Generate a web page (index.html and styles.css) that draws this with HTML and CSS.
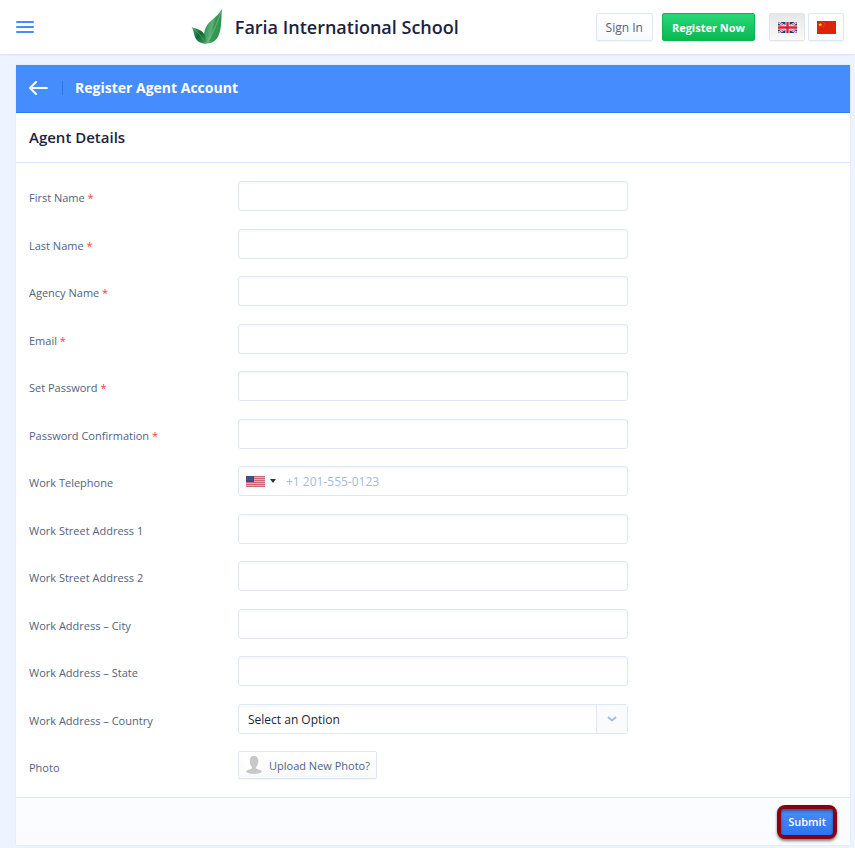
FILE: index.html
```html
<!DOCTYPE html>
<html lang="en">
<head>
  <meta charset="UTF-8">
  <meta name="viewport" content="width=device-width, initial-scale=1">
  <title>Register Agent Account</title>
  <link rel="stylesheet" href="styles.css">
</head>
<body>

  <!-- Top bar -->
  <header class="topbar">
    <button type="button" class="menu-button" aria-label="Menu">
      <svg width="18" height="12" viewBox="0 0 18 12" fill="#458dff">
        <rect width="18" height="2" rx="1"/>
        <rect y="5" width="18" height="2" rx="1"/>
        <rect y="10" width="18" height="2" rx="1"/>
      </svg>
    </button>

    <a href="#" class="brand">
      <svg class="brand-logo" width="32" height="36" viewBox="0 0 32 36">
        <defs>
          <linearGradient id="leafBig" x1="0" y1="0.300" x2="1" y2="0.700">
            <stop offset="0" stop-color="#25894a"/>
            <stop offset="0.450" stop-color="#5cb474"/>
            <stop offset="0.550" stop-color="#379a58"/>
            <stop offset="1" stop-color="#2c8f4e"/>
          </linearGradient>
          <linearGradient id="leafSmall" x1="0" y1="0" x2="1" y2="1">
            <stop offset="0" stop-color="#4fa968"/>
            <stop offset="0.500" stop-color="#0d6a36"/>
            <stop offset="1" stop-color="#3f9c5b"/>
          </linearGradient>
        </defs>
        <path d="M31 0C30 8 31.500 24 25 30.500C22.500 33.500 18 35 13.500 34.500C12.500 28 12.500 21 16.500 15.500C20.500 10.500 27 7 31 0Z" fill="url(#leafBig)"/>
        <path d="M0.500 18C5 20 10.500 20 13.500 25.500C14.700 28 15 31 15.500 34.500C10 35 5.500 32.500 3.800 27.500C2.500 23.500 2.500 20.500 0.500 18Z" fill="url(#leafSmall)"/>
        <path d="M30.500 1C27 12 22.500 24 15.500 34" fill="none" stroke="#7cc48a" stroke-width="0.600"/>
        <path d="M1.500 19C6 23 11 27 14.500 34" fill="none" stroke="#6bb57c" stroke-width="0.600"/>
      </svg>
      <span>Faria International School</span>
    </a>

    <nav class="actions">
      <a href="#" class="btn">Sign In</a>
      <a href="#" class="btn btn-green">Register Now</a>
      <div class="languages">
        <button type="button" class="btn btn-flag active" aria-label="English">
          <svg width="19" height="11" viewBox="0 0 19 11">
            <rect width="19" height="11" fill="#233c86"/>
            <path d="M0 0L19 11M19 0L0 11" stroke="#fff" stroke-width="2"/>
            <path d="M0 0L19 11M19 0L0 11" stroke="#d4213d" stroke-width="0.800"/>
            <path d="M9.500 0V11M0 5.500H19" stroke="#fff" stroke-width="4"/>
            <path d="M9.500 0V11M0 5.500H19" stroke="#d4213d" stroke-width="2.400"/>
          </svg>
        </button>
        <button type="button" class="btn btn-flag" aria-label="Chinese">
          <svg width="19" height="13" viewBox="0 0 19 13">
            <rect width="19" height="13" fill="#de2408"/>
            <path d="M3.200 1.500L3.700 3H5.200L4 3.900L4.500 5.400L3.200 4.500L1.900 5.400L2.400 3.900L1.200 3H2.700Z" fill="#ffd500"/>
            <g fill="#f18a10">
              <circle cx="6.500" cy="1.500" r="0.400"/>
              <circle cx="7.600" cy="2.600" r="0.400"/>
              <circle cx="7.600" cy="4.200" r="0.400"/>
              <circle cx="6.500" cy="5.400" r="0.400"/>
            </g>
          </svg>
        </button>
      </div>
    </nav>
  </header>

  <!-- Registration form -->
  <main class="panel">
    <div class="panel-bar">
      <a href="#" class="back" aria-label="Back">
        <svg width="19" height="14" viewBox="0 0 19 14" fill="none" stroke="#fff" stroke-width="2" stroke-linecap="round" stroke-linejoin="round">
          <path d="M18 7H1M7 1L1 7L7 13"/>
        </svg>
      </a>
      <h1>Register Agent Account</h1>
    </div>

    <h2>Agent Details</h2>

    <form>
      <div class="fields">
        <div class="row">
          <label for="firstName">First Name <span class="required">*</span></label>
          <input type="text" id="firstName" class="control">
        </div>
        <div class="row">
          <label for="lastName">Last Name <span class="required">*</span></label>
          <input type="text" id="lastName" class="control">
        </div>
        <div class="row">
          <label for="agencyName">Agency Name <span class="required">*</span></label>
          <input type="text" id="agencyName" class="control">
        </div>
        <div class="row">
          <label for="email">Email <span class="required">*</span></label>
          <input type="email" id="email" class="control">
        </div>
        <div class="row">
          <label for="password">Set Password <span class="required">*</span></label>
          <input type="password" id="password" class="control">
        </div>
        <div class="row">
          <label for="passwordConfirm">Password Confirmation <span class="required">*</span></label>
          <input type="password" id="passwordConfirm" class="control">
        </div>
        <div class="row">
          <label for="phone">Work Telephone</label>
          <div class="control phone">
            <button type="button" class="phone-country" aria-label="Country code">
              <svg width="19" height="11" viewBox="0 0 19 11">
                <rect width="19" height="11" fill="#e5a9b3"/>
                <path d="M0 0.500H19M0 2.500H19M0 4.500H19M0 6.500H19M0 8.500H19M0 10.500H19" stroke="#cf6577"/>
                <rect width="8" height="6" fill="#484880"/>
                <path d="M1 1.500H7M1 3.500H7" stroke="#6c6a98" stroke-width="0.600" stroke-dasharray="1 1"/>
              </svg>
              <svg width="6" height="4" viewBox="0 0 6 4" fill="#333"><path d="M0 0H6L3 4Z"/></svg>
            </button>
            <input type="tel" id="phone" placeholder="+1 201-555-0123">
          </div>
        </div>
        <div class="row">
          <label for="street1">Work Street Address 1</label>
          <input type="text" id="street1" class="control">
        </div>
        <div class="row">
          <label for="street2">Work Street Address 2</label>
          <input type="text" id="street2" class="control">
        </div>
        <div class="row">
          <label for="city">Work Address – City</label>
          <input type="text" id="city" class="control">
        </div>
        <div class="row">
          <label for="state">Work Address – State</label>
          <input type="text" id="state" class="control">
        </div>
        <div class="row">
          <label for="country">Work Address – Country</label>
          <div class="select">
            <select id="country" class="control">
              <option>Select an Option</option>
            </select>
            <span class="select-arrow">
              <svg width="10" height="6" viewBox="0 0 10 6" fill="none" stroke="#a3bfe8" stroke-width="2"><path d="M1 1L5 4.500L9 1"/></svg>
            </span>
          </div>
        </div>
        <div class="row">
          <label for="photo">Photo</label>
          <button type="button" id="photo" class="btn btn-upload">
            <svg width="18" height="18" viewBox="0 0 18 18">
              <rect width="18" height="18" rx="2" fill="#fff"/>
              <path d="M9 0C11.800 0 13.500 2 13.300 5C13.200 7.500 12.500 9.500 11.200 10.800V12.500C12.500 13.600 16.500 13.500 17 16C14 18.600 4 18.600 1 16C1.500 13.500 5.500 13.600 6.800 12.500V10.800C5.500 9.500 4.800 7.500 4.700 5C4.500 2 6.200 0 9 0Z" fill="#c8c8c8"/>
            </svg>
            Upload New Photo?
          </button>
        </div>
      </div>

      <div class="panel-footer">
        <div class="submit-ring">
          <button type="submit" class="btn-submit">Submit</button>
        </div>
      </div>
    </form>
  </main>

</body>
</html>
```
FILE: styles.css
```css
* { box-sizing: border-box; }

body {
  margin: 0;
  font-family: 'Open Sans', 'Noto Sans', sans-serif;
  font-size: 12px;
  color: #1c2340;
  background: #eef4ff;
}

a { text-decoration: none; }

button, input, select {
  font-family: inherit;
  font-size: 12px;
}

/* Top bar */
.topbar {
  display: flex;
  align-items: center;
  height: 54px;
  padding: 0 11px 0 16px;
  background: #fff;
  box-shadow: 0 1px 2px #d6e0ec;
}

.menu-button {
  display: flex;
  padding: 0;
  border: none;
  background: none;
  cursor: pointer;
}

.brand {
  flex: 1;
  display: flex;
  align-items: center;
  justify-content: center;
  gap: 12px;
  padding-left: 20px;
  font-size: 18px;
  font-weight: 600;
  color: #1c2340;
  white-space: nowrap;
}

.actions {
  display: flex;
  align-items: center;
  gap: 9px;
}

.languages {
  display: flex;
  gap: 3px;
  margin-left: 5px;
}

.btn {
  display: flex;
  align-items: center;
  justify-content: center;
  height: 28px;
  padding: 0 9px;
  border: 1px solid #dce8f8;
  border-radius: 2px;
  background: linear-gradient(#fff, #f9fafc);
  box-shadow: 0 1px 1px rgba(0, 0, 0, 0.04);
  color: #53627f;
  white-space: nowrap;
  cursor: pointer;
}

.btn-green {
  border-color: #0fb453;
  background: linear-gradient(#27d878, #0ab850);
  color: #fff;
  font-size: 11px;
  font-weight: 700;
}

.btn-flag {
  width: 36px;
  padding: 0;
}

.btn-flag.active {
  border-color: #e2e4e8;
  background: linear-gradient(#e6e7e9, #fafafa);
}

/* Panel */
.panel {
  margin: 11px 5px 3px 16px;
  background: #fff;
  box-shadow: 0 0 2px #d3e1f5;
}

.panel-bar {
  display: flex;
  align-items: center;
  height: 48px;
  padding: 0 13px 2px;
  background: #458dff;
  border-bottom: 1px solid #2f7df5;
}

.back {
  display: flex;
  padding-right: 14px;
}

h1 {
  margin: 0;
  padding-left: 12px;
  border-left: 1px solid #3474d8;
  font-size: 14px;
  line-height: 14px;
  font-weight: 700;
  color: #fff;
}

h2 {
  margin: 0;
  padding: 0 13px;
  border-bottom: 1px solid #d9e8fa;
  font-size: 15px;
  line-height: 49px;
  font-weight: 600;
}

/* Form rows */
.fields {
  padding: 18px 13px 0;
}

.row {
  display: flex;
  align-items: flex-start;
  padding-bottom: 18px;
}

.row:nth-child(even) {
  padding-bottom: 17px;
}

.row label {
  flex: 0 0 209px;
  padding-top: 8px;
  font-size: 11px;
  line-height: 18px;
  color: #53627f;
}

.row .required { color: #f0433a; }

.control {
  width: 100%;
  max-width: 390px;
  height: 30px;
  padding: 0 9px;
  border: 1px solid #dce8f8;
  border-radius: 3px;
  background: #fff;
  box-shadow: inset 0 2px 2px #f8f9fb;
  color: #1c2340;
}

.phone {
  display: flex;
  padding: 0 7px;
}

.phone-country {
  display: flex;
  align-items: center;
  gap: 5px;
  padding: 0;
  border: none;
  background: none;
  cursor: pointer;
}

.phone input {
  flex: 1;
  min-width: 0;
  padding: 0 0 0 10px;
  border: none;
  background: none;
}

.phone input::placeholder { color: #a3bbdd; }

.select {
  position: relative;
  width: 100%;
  max-width: 390px;
}

.select select {
  display: block;
  appearance: none;
}

/* Arrow cell drawn over the right end of the select */
.select-arrow {
  position: absolute;
  top: 1px;
  right: 1px;
  bottom: 1px;
  width: 31px;
  display: flex;
  align-items: center;
  justify-content: center;
  border-left: 1px solid #dce8f8;
  background: #fafbfc;
  pointer-events: none;
}

.btn-upload {
  gap: 6px;
  padding: 0 6px;
  font-size: 11px;
}

/* Footer */
.panel-footer {
  display: flex;
  justify-content: flex-end;
  padding: 7px 13px 6px;
  border-top: 1px solid #d9e8fa;
  background: #fafcff;
}

.submit-ring {
  border: 4px solid #8a0010;
  border-radius: 8px;
  background: #8a0010;
  box-shadow: 0 2px 3px rgba(0, 0, 0, 0.5);
}

.btn-submit {
  display: block;
  height: 26px;
  padding: 0 7px 2px;
  border: none;
  border-radius: 3px;
  background: linear-gradient(#4a8dfa, #2e74ee);
  box-shadow: inset 0 2px 3px rgba(0, 0, 40, 0.4);
  color: #fff;
  font-size: 11px;
  font-weight: 600;
  cursor: pointer;
}

/* Narrow screens */
@media (max-width: 600px) {
  .row { flex-direction: column; }
  .row label { flex: none; padding: 0 0 4px; }
  .brand span { display: none; }
}
```
